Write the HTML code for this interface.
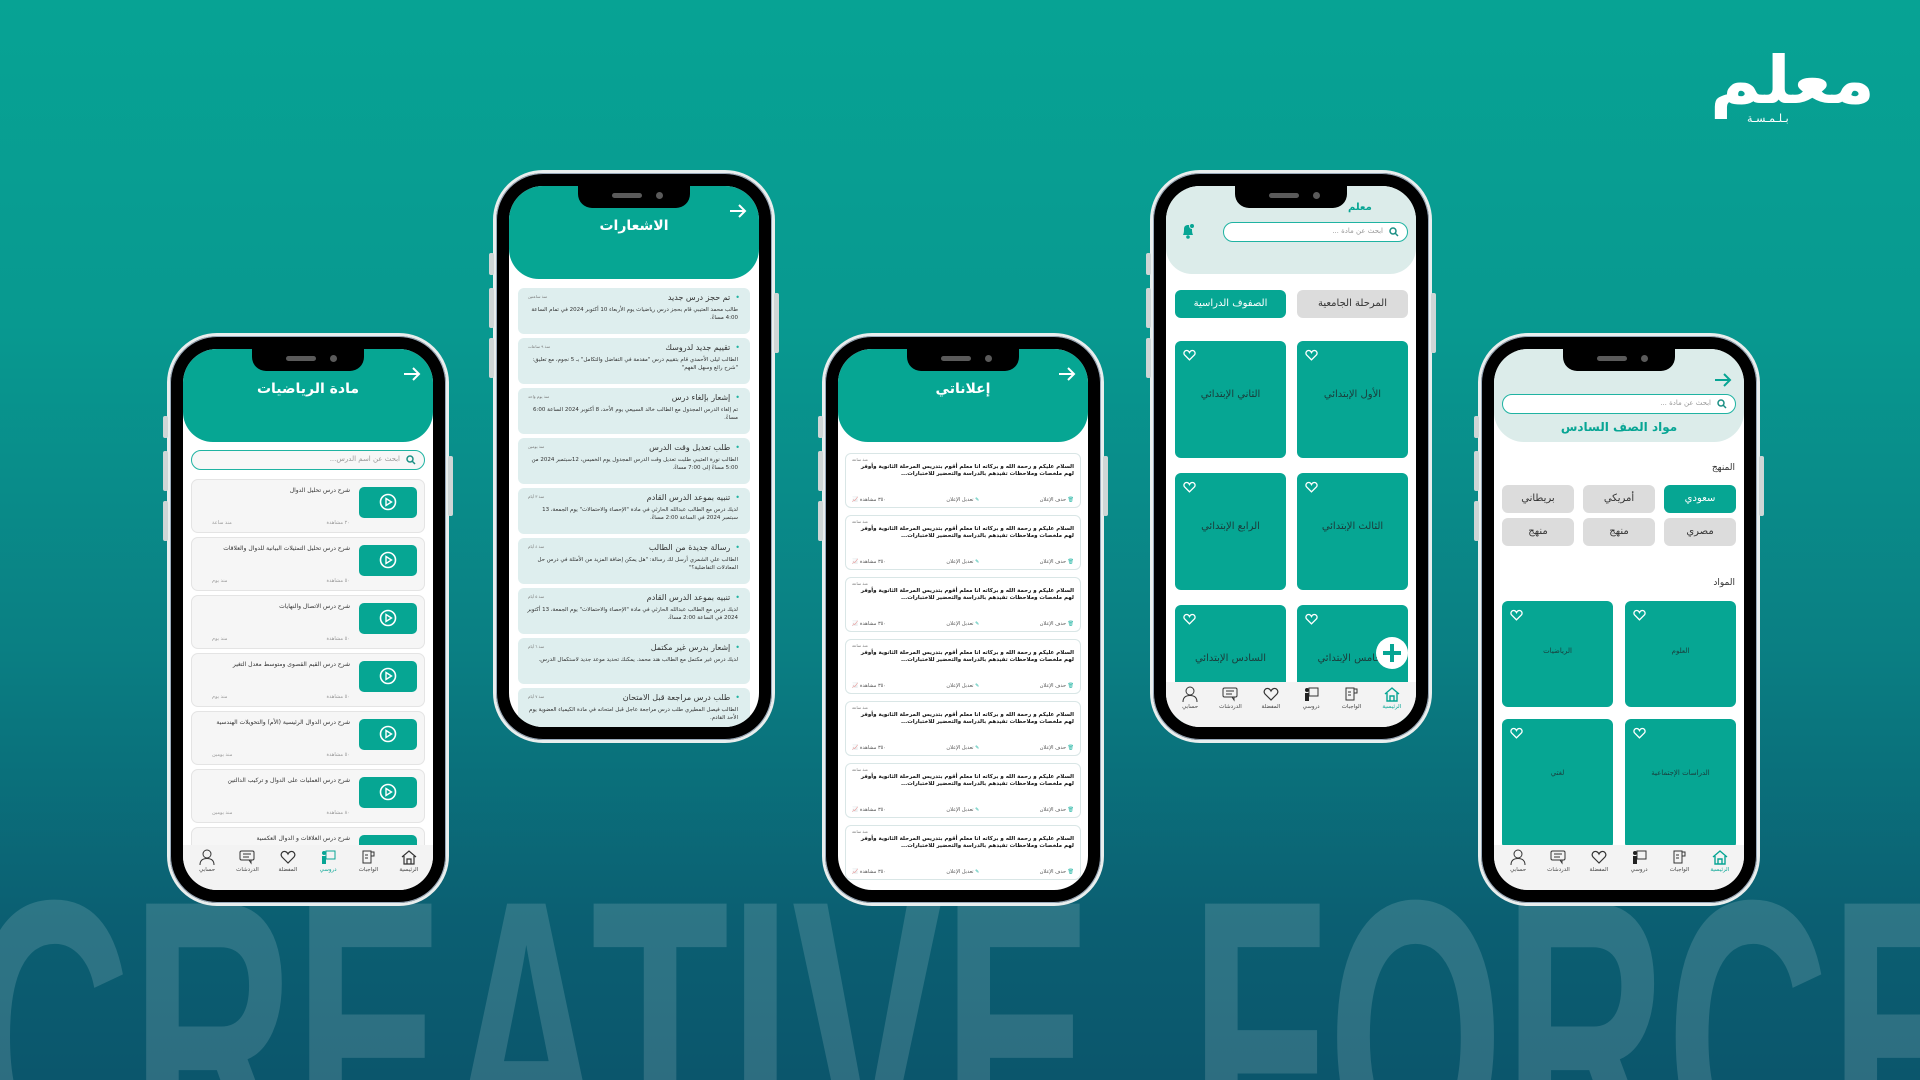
<!DOCTYPE html>
<html><head><meta charset="utf-8">
<style>
*{margin:0;padding:0;box-sizing:border-box}
html{width:1920px;height:1080px;overflow:hidden}
body{width:1920px;height:1080px;overflow:hidden;position:relative;font-family:"DejaVu Sans","Liberation Sans",sans-serif;
background:linear-gradient(180deg,#07a394 0%,#089990 30%,#0a7f83 60%,#0b5f72 85%,#0b566c 100%);}
.bigtxt{position:absolute;left:0;top:0}
.phone{position:absolute;width:282px;height:573px;background:#000;border:3px solid #e9eeee;border-radius:50px;box-shadow:0 0 0 1px #9ab inset}
.btn{position:absolute;left:-7px;width:5px;background:#cfd6d6;border-radius:2px}
.btnr{position:absolute;right:-7px;width:5px;background:#cfd6d6;border-radius:2px}
.screen{position:absolute;left:13px;top:13px;width:250px;height:541px;border-radius:34px;overflow:hidden;background:#fff}
.notch{position:absolute;left:69px;top:0;width:112px;height:22px;background:#000;border-radius:0 0 14px 14px;z-index:5}
.notch i{position:absolute;left:34px;top:7px;width:30px;height:5px;border-radius:3px;background:#5a5a5a}
.notch b{position:absolute;left:78px;top:6px;width:7px;height:7px;border-radius:50%;background:#5a5a5a}
.hdr{position:absolute;left:0;top:0;width:250px;height:93px;background:#06a693;border-radius:0 0 30px 30px}
.hdr h1{position:absolute;left:0;right:0;top:32px;text-align:center;color:#fff;font-size:14px;font-weight:bold}
.arrow{position:absolute;right:12px;top:18px}
.nav{position:absolute;left:0;bottom:0;width:250px;height:45px;background:#f3f3f3;display:flex;justify-content:space-around;padding:4px 4px 0}
.nav div{width:38px;text-align:center;font-size:5.5px;color:#444}
.nav svg{display:block;margin:0 auto 2px}
.nav .on{color:#07a594}
.search{position:absolute;height:20px;border:1.5px solid #1fb3a2;border-radius:11px;background:#f7f7f7;font-size:7px;color:#999;direction:rtl;padding:4px 0 0 0}
.search span{position:absolute;right:24px;top:4px}
.search svg{position:absolute;right:8px;top:4px}
.card1{position:absolute;left:8px;width:234px;height:54px;background:#f6f6f6;border:1px solid #e4e4e4;border-radius:7px}
.card1 .pl{position:absolute;right:7px;top:7px;width:58px;height:31px;background:#06a693;border-radius:5px}
.card1 .pl svg{position:absolute;left:20px;top:6px}
.card1 .t{position:absolute;right:74px;top:7px;width:140px;font-size:6px;color:#333;direction:rtl;text-align:right;line-height:8px}
.card1 .v{position:absolute;right:74px;bottom:6px;font-size:5px;color:#999}
.card1 .d{position:absolute;left:20px;bottom:6px;font-size:5px;color:#999}
.nt{position:absolute;left:9px;width:232px;height:46px;background:#deeeee;border-radius:6px;direction:rtl}
.nt .h{position:absolute;right:10px;top:5px;font-size:8px;color:#333}
.nt .h:before{content:"•";color:#1fb3a2;margin-left:5px}
.nt .b{position:absolute;right:12px;left:8px;top:18px;font-size:5.5px;line-height:8px;color:#333;text-align:right}
.nt .tm{position:absolute;left:10px;top:6px;font-size:4px;color:#777}
.ad{position:absolute;left:7px;width:236px;height:55px;background:#fff;border:1px solid #d9e6e6;border-radius:6px;direction:rtl}
.ad .tm{position:absolute;left:6px;top:3px;font-size:4px;color:#777}
.ad .b{position:absolute;right:6px;left:8px;top:10px;font-size:5.5px;line-height:7px;color:#111;font-weight:bold;text-align:right}
.ad .f{position:absolute;left:6px;right:6px;bottom:4px;font-size:5px;color:#555;display:flex;justify-content:space-between}
.ad .f em{font-style:normal;color:#1fb3a2}
.tile{position:absolute;width:111px;height:117px;background:#06a693;border-radius:6px}
.tile p{position:absolute;left:0;right:0;top:48px;text-align:center;font-size:10px;color:#1b3b3a}
.tile svg{position:absolute;left:8px;top:8px}
.chip{position:absolute;width:72px;height:28px;border-radius:6px;background:#dcdcdc;font-size:10px;color:#333;text-align:center;line-height:28px}
.chip.on{background:#06a693;color:#fff}
</style></head><body>

<svg class="bigtxt" width="1920" height="1080">
<text x="-32" y="1172" font-family="Liberation Sans Narrow, Liberation Sans, sans-serif" font-weight="bold" font-size="390" fill="#ffffff" fill-opacity="0.14" textLength="1125" lengthAdjust="spacingAndGlyphs">CREATIVE</text>
<text x="1190" y="1172" font-family="Liberation Sans Narrow, Liberation Sans, sans-serif" font-weight="bold" font-size="390" fill="#ffffff" fill-opacity="0.14" textLength="790" lengthAdjust="spacingAndGlyphs">FORCE</text>
</svg>

<!-- logo -->
<div style="position:absolute;left:1705px;top:46px;width:175px;height:84px;text-align:center;color:#fff;direction:rtl;overflow:hidden">
<div style="font-size:66px;font-weight:bold;line-height:70px;letter-spacing:-2px;transform:scaleX(1.05)">معلم</div>
<div style="position:absolute;left:42px;top:66px;font-size:11px;direction:rtl">بـلـمـسـة</div>
</div>

<!-- PHONE 1 -->
<div class="phone" style="left:167px;top:333px">
<div class="btn" style="top:80px;height:22px"></div><div class="btn" style="top:115px;height:40px"></div><div class="btn" style="top:165px;height:40px"></div><div class="btnr" style="top:120px;height:60px"></div>
<div class="screen">
<div class="notch"><i></i><b></b></div>
<div class="hdr"><h1>مادة الرياضيات</h1>
<svg class="arrow" width="18" height="14" viewBox="0 0 18 14"><path d="M1 7H16M10 1L16 7L10 13" stroke="#fff" stroke-width="2" fill="none"/></svg></div>
<div class="search" style="left:8px;top:101px;width:234px"><span>ابحث عن اسم الدرس...</span><svg width="10" height="10" viewBox="0 0 10 10"><circle cx="4" cy="4" r="3" stroke="#1a8f84" stroke-width="1.5" fill="none"/><path d="M6 6L9 9" stroke="#1a8f84" stroke-width="1.5"/></svg></div>
<div class="card1" style="top:130px"><div class="pl"><svg width="18" height="18" viewBox="0 0 18 18"><circle cx="9" cy="9" r="7.5" stroke="#fff" stroke-width="1.6" fill="none"/><path d="M7 5.5L12.5 9L7 12.5Z" stroke="#fff" stroke-width="1.4" fill="none"/></svg></div><div class="t">شرح درس تحليل الدوال</div><div class="v">٢٠ مشاهدة</div><div class="d">منذ ساعة</div></div>
<div class="card1" style="top:188px"><div class="pl"><svg width="18" height="18" viewBox="0 0 18 18"><circle cx="9" cy="9" r="7.5" stroke="#fff" stroke-width="1.6" fill="none"/><path d="M7 5.5L12.5 9L7 12.5Z" stroke="#fff" stroke-width="1.4" fill="none"/></svg></div><div class="t">شرح درس تحليل التمثيلات البيانية للدوال والعلاقات</div><div class="v">٥٠ مشاهدة</div><div class="d">منذ يوم</div></div>
<div class="card1" style="top:246px"><div class="pl"><svg width="18" height="18" viewBox="0 0 18 18"><circle cx="9" cy="9" r="7.5" stroke="#fff" stroke-width="1.6" fill="none"/><path d="M7 5.5L12.5 9L7 12.5Z" stroke="#fff" stroke-width="1.4" fill="none"/></svg></div><div class="t">شرح درس الاتصال والنهايات</div><div class="v">٥٠ مشاهدة</div><div class="d">منذ يوم</div></div>
<div class="card1" style="top:304px"><div class="pl"><svg width="18" height="18" viewBox="0 0 18 18"><circle cx="9" cy="9" r="7.5" stroke="#fff" stroke-width="1.6" fill="none"/><path d="M7 5.5L12.5 9L7 12.5Z" stroke="#fff" stroke-width="1.4" fill="none"/></svg></div><div class="t">شرح درس القيم القصوى ومتوسط معدل التغير</div><div class="v">٥٠ مشاهدة</div><div class="d">منذ يوم</div></div>
<div class="card1" style="top:362px"><div class="pl"><svg width="18" height="18" viewBox="0 0 18 18"><circle cx="9" cy="9" r="7.5" stroke="#fff" stroke-width="1.6" fill="none"/><path d="M7 5.5L12.5 9L7 12.5Z" stroke="#fff" stroke-width="1.4" fill="none"/></svg></div><div class="t">شرح درس الدوال الرئيسية (الأم) والتحويلات الهندسية</div><div class="v">٥٠ مشاهدة</div><div class="d">منذ يومين</div></div>
<div class="card1" style="top:420px"><div class="pl"><svg width="18" height="18" viewBox="0 0 18 18"><circle cx="9" cy="9" r="7.5" stroke="#fff" stroke-width="1.6" fill="none"/><path d="M7 5.5L12.5 9L7 12.5Z" stroke="#fff" stroke-width="1.4" fill="none"/></svg></div><div class="t">شرح درس العمليات على الدوال و تركيب الدالتين</div><div class="v">٨٠ مشاهدة</div><div class="d">منذ يومين</div></div>
<div class="card1" style="top:478px"><div class="pl"></div><div class="t">شرح درس العلاقات و الدوال العكسية</div></div>
<div class="nav">
<div><svg width="16" height="16" viewBox="0 0 16 16"><circle cx="8" cy="5" r="4" stroke="#333" fill="none"/><path d="M1 16C1 11 4 9.5 8 9.5S15 11 15 16" stroke="#333" fill="none"/></svg>حسابي</div>
<div><svg width="16" height="16" viewBox="0 0 16 16"><rect x="1" y="2" width="14" height="9" rx="1.5" stroke="#333" fill="none"/><path d="M4 5H12M4 8H10M10 11L12 14V11" stroke="#333" fill="none"/></svg>الدردشات</div>
<div><svg width="16" height="16" viewBox="0 0 16 16"><path d="M8 14L2 8C0 5.5 2 2 5 2.5 6.5 2.8 7.5 4 8 5 8.5 4 9.5 2.8 11 2.5 14 2 16 5.5 14 8Z" stroke="#333" stroke-width="1.2" fill="none"/></svg>المفضلة</div>
<div class="on"><svg width="16" height="16" viewBox="0 0 16 16"><rect x="6" y="2" width="9" height="8" stroke="#07a594" fill="none"/><circle cx="4" cy="4" r="2" fill="#07a594"/><rect x="2" y="7" width="4" height="8" fill="#07a594"/></svg>دروسي</div>
<div><svg width="16" height="16" viewBox="0 0 16 16"><rect x="3" y="2" width="8" height="12" stroke="#333" fill="none"/><path d="M11 3H14V7H11M5 6H8M5 9H8" stroke="#333" fill="none"/></svg>الواجبات</div>
<div><svg width="16" height="16" viewBox="0 0 16 16"><path d="M1 8L8 2L15 8M3 7V15H13V7M6 15V10H10V15" stroke="#333" stroke-width="1.2" fill="none"/></svg>الرئيسية</div>
</div>
</div></div>

<!-- PHONE 2 -->
<div class="phone" style="left:493px;top:170px">
<div class="btn" style="top:80px;height:22px"></div><div class="btn" style="top:115px;height:40px"></div><div class="btn" style="top:165px;height:40px"></div><div class="btnr" style="top:120px;height:60px"></div>
<div class="screen">
<div class="notch"><i></i><b></b></div>
<div class="hdr"><h1>الاشعارات</h1>
<svg class="arrow" width="18" height="14" viewBox="0 0 18 14"><path d="M1 7H16M10 1L16 7L10 13" stroke="#fff" stroke-width="2" fill="none"/></svg></div>
<div class="nt" style="top:102px"><div class="h">تم حجز درس جديد</div><div class="tm">منذ ساعتين</div><div class="b">طالب محمد العتيبي قام بحجز درس رياضيات يوم الأربعاء 10 أكتوبر 2024 في تمام الساعة 4:00 مساءً.</div></div>
<div class="nt" style="top:152px"><div class="h">تقييم جديد لدروسك</div><div class="tm">منذ ٩ ساعات</div><div class="b">الطالب ليلى الأحمدي قام بتقييم درس "مقدمة في التفاضل والتكامل" بـ 5 نجوم، مع تعليق: "شرح رائع وسهل الفهم"</div></div>
<div class="nt" style="top:202px"><div class="h">إشعار بإلغاء درس</div><div class="tm">منذ يوم واحد</div><div class="b">تم إلغاء الدرس المجدول مع الطالب خالد السبيعي يوم الأحد، 8 أكتوبر 2024 الساعة 6:00 مساءً.</div></div>
<div class="nt" style="top:252px"><div class="h">طلب تعديل وقت الدرس</div><div class="tm">منذ يومين</div><div class="b">الطالب نورة العتيبي طلبت تعديل وقت الدرس المجدول يوم الخميس، 12سبتمبر 2024 من 5:00 مساءً إلى 7:00 مساءً.</div></div>
<div class="nt" style="top:302px"><div class="h">تنبيه بموعد الدرس القادم</div><div class="tm">منذ ٣ أيام</div><div class="b">لديك درس مع الطالب عبدالله الحارثي في مادة "الإحصاء والاحتمالات" يوم الجمعة، 13 سبتمبر 2024 في الساعة 2:00 مساءً.</div></div>
<div class="nt" style="top:352px"><div class="h">رسالة جديدة من الطالب</div><div class="tm">منذ ٤ أيام</div><div class="b">الطالب علي الشمري أرسل لك رسالة: "هل يمكن إضافة المزيد من الأمثلة في درس حل المعادلات التفاضلية؟"</div></div>
<div class="nt" style="top:402px"><div class="h">تنبيه بموعد الدرس القادم</div><div class="tm">منذ ٥ أيام</div><div class="b">لديك درس مع الطالب عبدالله الحارثي في مادة "الإحصاء والاحتمالات" يوم الجمعة، 13 أكتوبر 2024 في الساعة 2:00 مساءً.</div></div>
<div class="nt" style="top:452px"><div class="h">إشعار بدرس غير مكتمل</div><div class="tm">منذ ٦ أيام</div><div class="b">لديك درس غير مكتمل مع الطالب هند محمد. يمكنك تحديد موعد جديد لاستكمال الدرس.</div></div>
<div class="nt" style="top:502px"><div class="h">طلب درس مراجعة قبل الامتحان</div><div class="tm">منذ ٧ أيام</div><div class="b">الطالب فيصل المطيري طلب درس مراجعة عاجل قبل امتحانه في مادة الكيمياء العضوية يوم الأحد القادم.</div></div>
</div></div>

<!-- PHONE 3 -->
<div class="phone" style="left:822px;top:333px">
<div class="btn" style="top:80px;height:22px"></div><div class="btn" style="top:115px;height:40px"></div><div class="btn" style="top:165px;height:40px"></div><div class="btnr" style="top:120px;height:60px"></div>
<div class="screen">
<div class="notch"><i></i><b></b></div>
<div class="hdr"><h1>إعلاناتي</h1>
<svg class="arrow" width="18" height="14" viewBox="0 0 18 14"><path d="M1 7H16M10 1L16 7L10 13" stroke="#fff" stroke-width="2" fill="none"/></svg></div>
<div class="ad" style="top:104px"><div class="tm">منذ ساعة</div><div class="b">السلام عليكم و رحمة الله و بركاته انا معلم أقوم بتدريس المرحلة الثانوية وأوفر لهم ملخصات وملاحظات تفيدهم بالدراسة والتحضير للاختبارات...</div><div class="f"><span><em>🗑</em> حذف الإعلان</span><span><em>✎</em> تعديل الإعلان</span><span>٣٥٠ مشاهدة <em>📈</em></span></div></div>
<div class="ad" style="top:166px"><div class="tm">منذ ساعة</div><div class="b">السلام عليكم و رحمة الله و بركاته انا معلم أقوم بتدريس المرحلة الثانوية وأوفر لهم ملخصات وملاحظات تفيدهم بالدراسة والتحضير للاختبارات...</div><div class="f"><span><em>🗑</em> حذف الإعلان</span><span><em>✎</em> تعديل الإعلان</span><span>٣٥٠ مشاهدة <em>📈</em></span></div></div>
<div class="ad" style="top:228px"><div class="tm">منذ ساعة</div><div class="b">السلام عليكم و رحمة الله و بركاته انا معلم أقوم بتدريس المرحلة الثانوية وأوفر لهم ملخصات وملاحظات تفيدهم بالدراسة والتحضير للاختبارات...</div><div class="f"><span><em>🗑</em> حذف الإعلان</span><span><em>✎</em> تعديل الإعلان</span><span>٣٥٠ مشاهدة <em>📈</em></span></div></div>
<div class="ad" style="top:290px"><div class="tm">منذ ساعة</div><div class="b">السلام عليكم و رحمة الله و بركاته انا معلم أقوم بتدريس المرحلة الثانوية وأوفر لهم ملخصات وملاحظات تفيدهم بالدراسة والتحضير للاختبارات...</div><div class="f"><span><em>🗑</em> حذف الإعلان</span><span><em>✎</em> تعديل الإعلان</span><span>٣٥٠ مشاهدة <em>📈</em></span></div></div>
<div class="ad" style="top:352px"><div class="tm">منذ ساعة</div><div class="b">السلام عليكم و رحمة الله و بركاته انا معلم أقوم بتدريس المرحلة الثانوية وأوفر لهم ملخصات وملاحظات تفيدهم بالدراسة والتحضير للاختبارات...</div><div class="f"><span><em>🗑</em> حذف الإعلان</span><span><em>✎</em> تعديل الإعلان</span><span>٣٥٠ مشاهدة <em>📈</em></span></div></div>
<div class="ad" style="top:414px"><div class="tm">منذ ساعة</div><div class="b">السلام عليكم و رحمة الله و بركاته انا معلم أقوم بتدريس المرحلة الثانوية وأوفر لهم ملخصات وملاحظات تفيدهم بالدراسة والتحضير للاختبارات...</div><div class="f"><span><em>🗑</em> حذف الإعلان</span><span><em>✎</em> تعديل الإعلان</span><span>٣٥٠ مشاهدة <em>📈</em></span></div></div>
<div class="ad" style="top:476px"><div class="tm">منذ ساعة</div><div class="b">السلام عليكم و رحمة الله و بركاته انا معلم أقوم بتدريس المرحلة الثانوية وأوفر لهم ملخصات وملاحظات تفيدهم بالدراسة والتحضير للاختبارات...</div><div class="f"><span><em>🗑</em> حذف الإعلان</span><span><em>✎</em> تعديل الإعلان</span><span>٣٥٠ مشاهدة <em>📈</em></span></div></div>
</div></div>

<!-- PHONE 4 -->
<div class="phone" style="left:1150px;top:170px">
<div class="btn" style="top:80px;height:22px"></div><div class="btn" style="top:115px;height:40px"></div><div class="btn" style="top:165px;height:40px"></div><div class="btnr" style="top:120px;height:60px"></div>
<div class="screen">
<div class="notch"><i></i><b></b></div>
<div style="position:absolute;left:0;top:0;width:250px;height:88px;background:#dcecea;border-radius:0 0 26px 26px"></div>
<div style="position:absolute;left:182px;top:16px;font-size:10px;font-weight:bold;color:#07a594">معلم</div>
<svg style="position:absolute;left:15px;top:37px" width="14" height="16" viewBox="0 0 14 16"><path d="M2 12C3 10 3 8 3 6C3 3 5 2 7 2S11 3 11 6C11 8 11 10 12 12Z" fill="#07a594"/><circle cx="7" cy="14" r="1.8" fill="#07a594"/><circle cx="11" cy="3" r="2.5" fill="#07a594" stroke="#dcecea"/></svg>
<div class="search" style="left:57px;top:36px;width:185px;background:#fff"><span>ابحث عن مادة ...</span><svg width="10" height="10" viewBox="0 0 10 10"><circle cx="4" cy="4" r="3" stroke="#1a8f84" stroke-width="1.5" fill="none"/><path d="M6 6L9 9" stroke="#1a8f84" stroke-width="1.5"/></svg></div>
<div style="position:absolute;left:9px;top:104px;width:111px;height:28px;background:#06a693;border-radius:6px;color:#fff;font-size:10px;text-align:center;line-height:28px">الصفوف الدراسية</div>
<div style="position:absolute;left:131px;top:104px;width:111px;height:28px;background:#dcdcdc;border-radius:6px;color:#333;font-size:10px;text-align:center;line-height:28px">المرحلة الجامعية</div>
<div class="tile" style="left:9px;top:155px"><svg width="13" height="12" viewBox="0 0 16 14"><path d="M8 13L2 7C0 4.5 2 1 5 1.5 6.5 1.8 7.5 3 8 4 8.5 3 9.5 1.8 11 1.5 14 1 16 4.5 14 7Z" stroke="#fff" stroke-width="1.6" fill="none"/></svg><p>الثاني الإبتدائي</p></div>
<div class="tile" style="left:131px;top:155px"><svg width="13" height="12" viewBox="0 0 16 14"><path d="M8 13L2 7C0 4.5 2 1 5 1.5 6.5 1.8 7.5 3 8 4 8.5 3 9.5 1.8 11 1.5 14 1 16 4.5 14 7Z" stroke="#fff" stroke-width="1.6" fill="none"/></svg><p>الأول الإبتدائي</p></div>
<div class="tile" style="left:9px;top:287px"><svg width="13" height="12" viewBox="0 0 16 14"><path d="M8 13L2 7C0 4.5 2 1 5 1.5 6.5 1.8 7.5 3 8 4 8.5 3 9.5 1.8 11 1.5 14 1 16 4.5 14 7Z" stroke="#fff" stroke-width="1.6" fill="none"/></svg><p>الرابع الإبتدائي</p></div>
<div class="tile" style="left:131px;top:287px"><svg width="13" height="12" viewBox="0 0 16 14"><path d="M8 13L2 7C0 4.5 2 1 5 1.5 6.5 1.8 7.5 3 8 4 8.5 3 9.5 1.8 11 1.5 14 1 16 4.5 14 7Z" stroke="#fff" stroke-width="1.6" fill="none"/></svg><p>الثالث الإبتدائي</p></div>
<div class="tile" style="left:9px;top:419px"><svg width="13" height="12" viewBox="0 0 16 14"><path d="M8 13L2 7C0 4.5 2 1 5 1.5 6.5 1.8 7.5 3 8 4 8.5 3 9.5 1.8 11 1.5 14 1 16 4.5 14 7Z" stroke="#fff" stroke-width="1.6" fill="none"/></svg><p style="top:48px">السادس الإبتدائي</p></div>
<div class="tile" style="left:131px;top:419px"><svg width="13" height="12" viewBox="0 0 16 14"><path d="M8 13L2 7C0 4.5 2 1 5 1.5 6.5 1.8 7.5 3 8 4 8.5 3 9.5 1.8 11 1.5 14 1 16 4.5 14 7Z" stroke="#fff" stroke-width="1.6" fill="none"/></svg><p style="top:48px">الخامس الإبتدائي</p></div>
<div style="position:absolute;left:210px;top:451px;width:32px;height:32px;border-radius:50%;background:#fff;z-index:3"><svg width="32" height="32" viewBox="0 0 32 32"><path d="M16 7V25M7 16H25" stroke="#07a594" stroke-width="4"/></svg></div>
<div class="nav">
<div><svg width="16" height="16" viewBox="0 0 16 16"><circle cx="8" cy="5" r="4" stroke="#333" fill="none"/><path d="M1 16C1 11 4 9.5 8 9.5S15 11 15 16" stroke="#333" fill="none"/></svg>حسابي</div>
<div><svg width="16" height="16" viewBox="0 0 16 16"><rect x="1" y="2" width="14" height="9" rx="1.5" stroke="#333" fill="none"/><path d="M4 5H12M4 8H10M10 11L12 14V11" stroke="#333" fill="none"/></svg>الدردشات</div>
<div><svg width="16" height="16" viewBox="0 0 16 16"><path d="M8 14L2 8C0 5.5 2 2 5 2.5 6.5 2.8 7.5 4 8 5 8.5 4 9.5 2.8 11 2.5 14 2 16 5.5 14 8Z" stroke="#333" stroke-width="1.2" fill="none"/></svg>المفضلة</div>
<div><svg width="16" height="16" viewBox="0 0 16 16"><rect x="6" y="2" width="9" height="8" stroke="#333" fill="none"/><circle cx="4" cy="4" r="2" fill="#222"/><rect x="2" y="7" width="4" height="8" fill="#222"/></svg>دروسي</div>
<div><svg width="16" height="16" viewBox="0 0 16 16"><rect x="3" y="2" width="8" height="12" stroke="#333" fill="none"/><path d="M11 3H14V7H11M5 6H8M5 9H8" stroke="#333" fill="none"/></svg>الواجبات</div>
<div class="on"><svg width="16" height="16" viewBox="0 0 16 16"><path d="M1 8L8 2L15 8M3 7V15H13V7M6 15V10H10V15" stroke="#07a594" stroke-width="1.4" fill="none"/></svg>الرئيسية</div>
</div>
</div></div>

<!-- PHONE 5 -->
<div class="phone" style="left:1478px;top:333px">
<div class="btn" style="top:80px;height:22px"></div><div class="btn" style="top:115px;height:40px"></div><div class="btn" style="top:165px;height:40px"></div><div class="btnr" style="top:120px;height:60px"></div>
<div class="screen">
<div class="notch"><i></i><b></b></div>
<div style="position:absolute;left:0;top:0;width:250px;height:93px;background:#dcecea;border-radius:0 0 30px 30px"></div>
<svg class="arrow" style="top:24px" width="18" height="14" viewBox="0 0 18 14"><path d="M1 7H16M10 1L16 7L10 13" stroke="#07a594" stroke-width="2" fill="none"/></svg>
<div class="search" style="left:8px;top:45px;width:234px;background:#fff"><span>ابحث عن مادة ...</span><svg width="10" height="10" viewBox="0 0 10 10"><circle cx="4" cy="4" r="3" stroke="#1a8f84" stroke-width="1.5" fill="none"/><path d="M6 6L9 9" stroke="#1a8f84" stroke-width="1.5"/></svg></div>
<div style="position:absolute;left:0;right:0;top:71px;text-align:center;font-size:12px;font-weight:bold;color:#07a594">مواد الصف السادس</div>
<div style="position:absolute;right:9px;top:114px;font-size:9px;color:#333">المنهج</div>
<div class="chip on" style="left:170px;top:136px">سعودي</div>
<div class="chip" style="left:89px;top:136px">أمريكي</div>
<div class="chip" style="left:8px;top:136px">بريطاني</div>
<div class="chip" style="left:170px;top:169px">مصري</div>
<div class="chip" style="left:89px;top:169px">منهج</div>
<div class="chip" style="left:8px;top:169px">منهج</div>
<div style="position:absolute;right:9px;top:229px;font-size:9px;color:#333">المواد</div>
<div class="tile" style="left:8px;top:252px;height:106px"><svg width="13" height="12" viewBox="0 0 16 14"><path d="M8 13L2 7C0 4.5 2 1 5 1.5 6.5 1.8 7.5 3 8 4 8.5 3 9.5 1.8 11 1.5 14 1 16 4.5 14 7Z" stroke="#fff" stroke-width="1.6" fill="none"/></svg><p style="font-size:7px;top:46px">الرياضيات</p></div>
<div class="tile" style="left:131px;top:252px;height:106px"><svg width="13" height="12" viewBox="0 0 16 14"><path d="M8 13L2 7C0 4.5 2 1 5 1.5 6.5 1.8 7.5 3 8 4 8.5 3 9.5 1.8 11 1.5 14 1 16 4.5 14 7Z" stroke="#fff" stroke-width="1.6" fill="none"/></svg><p style="font-size:7px;top:46px">العلوم</p></div>
<div class="tile" style="left:8px;top:370px;height:130px"><svg width="13" height="12" viewBox="0 0 16 14"><path d="M8 13L2 7C0 4.5 2 1 5 1.5 6.5 1.8 7.5 3 8 4 8.5 3 9.5 1.8 11 1.5 14 1 16 4.5 14 7Z" stroke="#fff" stroke-width="1.6" fill="none"/></svg><p style="font-size:7px;top:50px">لغتي</p></div>
<div class="tile" style="left:131px;top:370px;height:130px"><svg width="13" height="12" viewBox="0 0 16 14"><path d="M8 13L2 7C0 4.5 2 1 5 1.5 6.5 1.8 7.5 3 8 4 8.5 3 9.5 1.8 11 1.5 14 1 16 4.5 14 7Z" stroke="#fff" stroke-width="1.6" fill="none"/></svg><p style="font-size:7px;top:50px">الدراسات الإجتماعية</p></div>
<div class="nav">
<div><svg width="16" height="16" viewBox="0 0 16 16"><circle cx="8" cy="5" r="4" stroke="#333" fill="none"/><path d="M1 16C1 11 4 9.5 8 9.5S15 11 15 16" stroke="#333" fill="none"/></svg>حسابي</div>
<div><svg width="16" height="16" viewBox="0 0 16 16"><rect x="1" y="2" width="14" height="9" rx="1.5" stroke="#333" fill="none"/><path d="M4 5H12M4 8H10M10 11L12 14V11" stroke="#333" fill="none"/></svg>الدردشات</div>
<div><svg width="16" height="16" viewBox="0 0 16 16"><path d="M8 14L2 8C0 5.5 2 2 5 2.5 6.5 2.8 7.5 4 8 5 8.5 4 9.5 2.8 11 2.5 14 2 16 5.5 14 8Z" stroke="#333" stroke-width="1.2" fill="none"/></svg>المفضلة</div>
<div><svg width="16" height="16" viewBox="0 0 16 16"><rect x="6" y="2" width="9" height="8" stroke="#333" fill="none"/><circle cx="4" cy="4" r="2" fill="#222"/><rect x="2" y="7" width="4" height="8" fill="#222"/></svg>دروسي</div>
<div><svg width="16" height="16" viewBox="0 0 16 16"><rect x="3" y="2" width="8" height="12" stroke="#333" fill="none"/><path d="M11 3H14V7H11M5 6H8M5 9H8" stroke="#333" fill="none"/></svg>الواجبات</div>
<div class="on"><svg width="16" height="16" viewBox="0 0 16 16"><path d="M1 8L8 2L15 8M3 7V15H13V7M6 15V10H10V15" stroke="#07a594" stroke-width="1.4" fill="none"/></svg>الرئيسية</div>
</div>
</div></div>

</body></html>
